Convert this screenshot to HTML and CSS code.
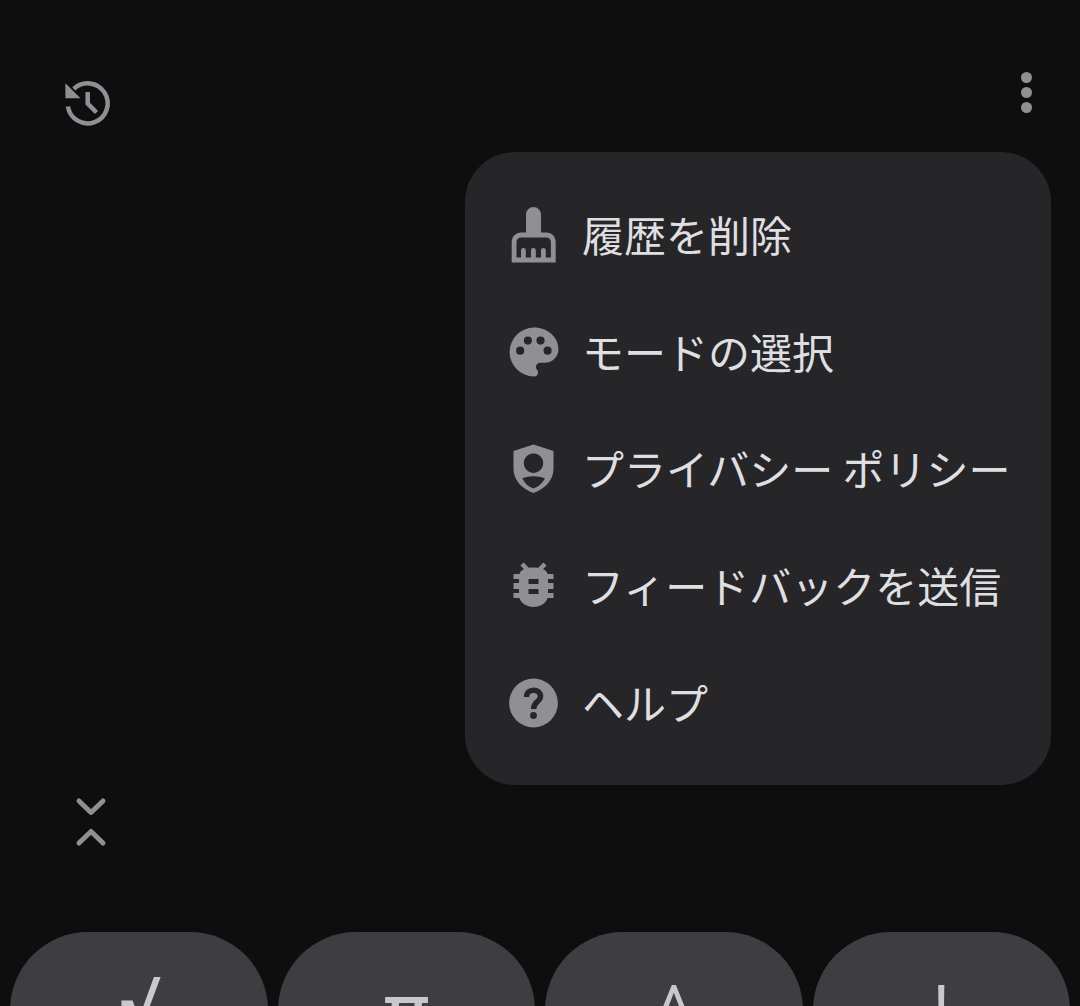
FILE: index.html
```html
<!DOCTYPE html>
<html lang="ja">
<head>
<meta charset="utf-8">
<title>電卓</title>
<link rel="stylesheet" href="styles.css">
</head>
<body>
<div class="page">
  <header class="topbar">
    <svg class="history" viewBox="0 0 50 50" aria-hidden="true">
      <path class="line" d="M10.800 9.900 A20 20 0 1 1 4.900 27.500"/>
      <path class="solid" d="M2.400 4.300 L17.500 19.300 L2.400 19.300 Z"/>
      <path class="line" d="M24.700 13 V24.500 L33.500 33.500"/>
    </svg>
    <div class="dots"><span></span><span></span><span></span></div>
  </header>

  <nav class="menu">
    <div class="item">
      <svg class="ico ico-tall" viewBox="0 0 50 56" aria-hidden="true">
        <path class="solid" fill-rule="evenodd" d="M17 7.500 a7.500 7.500 0 0 1 15 0 V25.500 H37.700 a9 9 0 0 1 9 9 V55.500 H2.700 V34.500 a9 9 0 0 1 9-9 H17 Z M7.500 50.500 H12 V43.500 a2.400 2.400 0 0 1 4.800 0 V50.500 H22 V43.500 a2.400 2.400 0 0 1 4.800 0 V50.500 H32 V43.500 a2.400 2.400 0 0 1 4.800 0 V50.500 H41.900 V35 a4.500 4.500 0 0 0-4.500-4.500 H12 a4.500 4.500 0 0 0-4.500 4.500 Z"/>
      </svg>
      <span>履歴を削除</span>
    </div>
    <div class="item">
      <svg class="ico" viewBox="2.800 2.800 18.400 18.400" aria-hidden="true">
        <path class="solid" fill-rule="evenodd" d="M12 3a9 9 0 0 0 0 18c.83 0 1.500-.67 1.500-1.500 0-.39-.15-.74-.39-1.010-.23-.26-.38-.61-.38-.99 0-.83.67-1.500 1.500-1.500H16c2.760 0 5-2.240 5-5 0-4.420-4.030-8-9-8zM6.900 13a1.500 1.500 0 1 1 0-3 1.500 1.500 0 0 1 0 3zm2.850-3.700a1.500 1.500 0 1 1 0-3 1.500 1.500 0 0 1 0 3zm4.650 0a1.500 1.500 0 1 1 0-3 1.500 1.500 0 0 1 0 3zM17 13a1.500 1.500 0 1 1 0-3 1.500 1.500 0 0 1 0 3z"/>
      </svg>
      <span>モードの選択</span>
    </div>
    <div class="item">
      <svg class="ico" viewBox="0 0 50 50" aria-hidden="true">
        <path class="solid" fill-rule="evenodd" d="M24.500 0.500 L44.500 7 V25 C44.500 36 36 45 24.500 49 C13 45 4.500 36 4.500 25 V7 Z M24.500 9.500 a9.700 9.700 0 1 0 0.010 0 Z M13.300 34.300 C20 31.500 29 31.500 36 34.300 C33 40 29 43 24.500 44.500 C20 43 16 40 13.300 34.300 Z"/>
      </svg>
      <span>プライバシー ポリシー</span>
    </div>
    <div class="item">
      <svg class="ico" viewBox="0 0 50 50" aria-hidden="true">
        <path class="solid" fill-rule="evenodd" d="M4.500 13 H10.500 C11.500 8.500 17 6.500 24.500 6.500 C32 6.500 37.500 8.500 38.500 13 H44.500 V18 H39 V22 H44.500 V28 H39 V32 H44.500 V37 H38.500 C37 42.500 31 46 24.500 46 C18 46 12 42.500 10.500 37 H4.500 V32 H10 V28 H4.500 V22 H10 V18 H4.500 Z M19.500 18 V23 H29.500 V18 Z M19.500 28 V33 H29.500 V28 Z"/>
        <path class="line" d="M13 3 L19 9 M36 3 L30 9"/>
      </svg>
      <span>フィードバックを送信</span>
    </div>
    <div class="item">
      <svg class="ico" viewBox="0 0 50 50" aria-hidden="true">
        <circle class="solid" cx="24.500" cy="25" r="24.400"/>
        <path class="qmark" d="M17.500 19 C17.500 10 31.500 10 31.500 18.500 C31.500 23.500 24.500 24 24.500 31"/>
        <circle class="qdot" cx="24.500" cy="37.500" r="3.400"/>
      </svg>
      <span>ヘルプ</span>
    </div>
  </nav>

  <div class="toggle">
    <svg class="chev" viewBox="0 0 32 50" aria-hidden="true">
      <path class="line" d="M4 4 L16 15.500 L28 4"/>
      <path class="line" d="M4 46 L16 34.500 L28 46"/>
    </svg>
  </div>

  <div class="keys">
    <div class="key key-root">√</div>
    <div class="key key-pi">π</div>
    <div class="key">^</div>
    <div class="key">!</div>
  </div>
</div>
</body>
</html>
```
FILE: styles.css
```css
* { box-sizing: border-box; }
html, body { margin: 0; height: 100%; }
body { background: #0e0e0f; font-family: "Noto Sans CJK JP", "Noto Sans", sans-serif; }

.page {
  position: relative;
  height: 100vh;
  overflow: hidden;
  display: flex;
  flex-direction: column;
}

.topbar {
  display: flex;
  justify-content: space-between;
  align-items: flex-start;
  height: 152px;
  padding: 72px 48px 0 63px;
  flex-shrink: 0;
}

.history { width: 50px; height: 50px; margin-top: 7px; }
.dots { display: flex; flex-direction: column; gap: 4px; width: 11px; }
.dots span { width: 11px; height: 11px; border-radius: 50%; background: #908f93; }

.line { fill: none; stroke: #908f93; stroke-width: 4.5; stroke-linecap: butt; }
.solid { fill: #908f93; }
.qmark { fill: none; stroke: #262628; stroke-width: 5.500; }
.qdot { fill: #262628; }

.menu {
  position: absolute;
  top: 152px;
  right: 29px;
  width: 586px;
  padding: 24px 0 24px 44px;
  background: #262628;
  border-radius: 50px;
  z-index: 2;
}
.item {
  display: flex;
  align-items: center;
  gap: 23px;
  height: 117px;
  color: #dfdfe1;
  font-size: 42px;
  white-space: nowrap;
}
.item span { padding-bottom: 2px; }
.ico { width: 50px; height: 50px; flex-shrink: 0; }
.ico-tall { height: 56px; }

.toggle {
  margin-top: 645px;
  padding-left: 75px;
  height: 135px;
  flex-shrink: 0;
}
.chev { display: block; width: 32px; height: 50px; }
.chev .line { stroke-linecap: round; stroke-linejoin: round; stroke-width: 5; }

.keys {
  display: grid;
  grid-template-columns: repeat(4, 1fr);
  gap: 10px;
  padding: 0 10px;
  flex-shrink: 0;
}
.key {
  height: 170px;
  padding-top: 40px;
  background: #3d3d42;
  border-radius: 78px;
  color: #c9c8cc;
  font-family: "Roboto", sans-serif;
  font-size: 64px;
  line-height: 76px;
  text-align: center;
}
.key-root { padding: 34px 0 0 4px; font-size: 72px; }
.key-pi { padding: 42px 0 0 2px; font-size: 80px; }
```
